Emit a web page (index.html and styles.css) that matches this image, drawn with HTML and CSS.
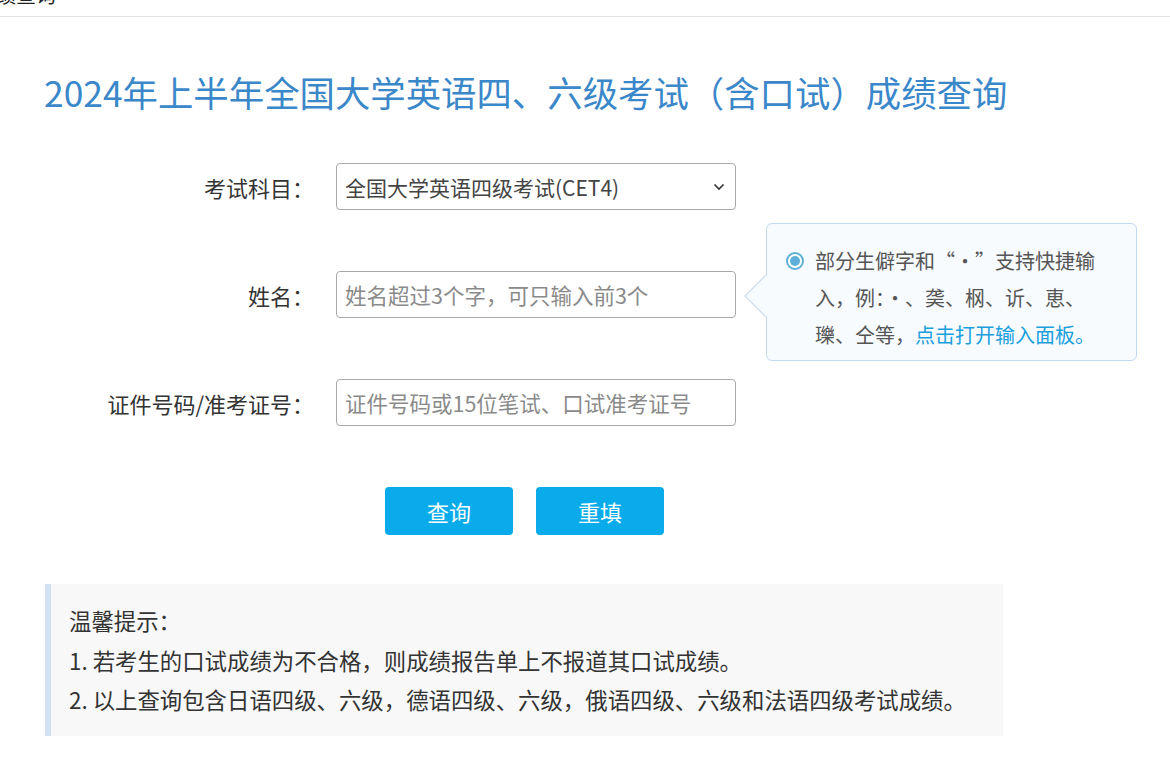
FILE: index.html
```html
<!DOCTYPE html>
<html lang="zh-CN">
<head>
<meta charset="UTF-8">
<title>2024年上半年全国大学英语四、六级考试（含口试）成绩查询</title>
<meta name="viewport" content="width=device-width, initial-scale=1.0">
<link rel="stylesheet" href="styles.css">
</head>
<body>

<div class="topbar"><span>成绩查询</span></div>

<div class="main">

<h1 class="title">2024年上半年全国大学英语四、六级考试（含口试）成绩查询</h1>

<form class="query" onsubmit="return false">
<label class="lbl" for="km">考试科目：</label>
<div class="field">
<select id="km">
<option>全国大学英语四级考试(CET4)</option>
<option>全国大学英语六级考试(CET6)</option>
</select>
</div>

<label class="lbl" for="xm">姓名：</label>
<div class="field name-field">
<input id="xm" placeholder="姓名超过3个字，可只输入前3个">
<div class="tip">
<span class="tip-arrow"></span>
<span class="radio"></span>
<p>部分生僻字和“·”支持快捷输入，例：·、䶮、㭎、䜣、恵、瓅、仝等，<a href="#">点击打开输入面板。</a></p>
</div>
</div>

<label class="lbl" for="zh">证件号码/准考证号：</label>
<div class="field">
<input id="zh" placeholder="证件号码或15位笔试、口试准考证号">
</div>

<div class="btns">
<button type="submit">查询</button>
<button type="reset">重填</button>
</div>
</form>

<div class="notice">
<p>温馨提示：</p>
<p>1. 若考生的口试成绩为不合格，则成绩报告单上不报道其口试成绩。</p>
<p>2. 以上查询包含日语四级、六级，德语四级、六级，俄语四级、六级和法语四级考试成绩。</p>
</div>

</div>

</body>
</html>
```

FILE: styles.css
```css
body{margin:0;background:#fff;color:#333;font-family:"Microsoft YaHei","Noto Sans CJK SC","Noto Sans",sans-serif}
.topbar{height:16px;border-bottom:1px solid #e2e2e2;overflow:hidden}
.topbar span{display:block;font-size:20px;line-height:20px;margin:-15px 0 0 -24px;color:#222}
.main{padding-left:44px}
.title{margin:53px 0 0;font-size:35.4px;line-height:44px;font-weight:normal;color:#3a87c9}
.query{display:grid;grid-template-columns:263px 400px;column-gap:29px;row-gap:61px;align-items:center;margin-top:49px}
.lbl{text-align:right;font-size:22px;line-height:30px;color:#333;margin-right:-7px}
.field{height:47px}
.field select,.field input{box-sizing:border-box;width:400px;height:47px;border:1px solid #a8a8a8;border-radius:4px;background:#fff;font-family:inherit;font-size:21px;color:#444;padding:0 8px;outline:none}
.field select{appearance:none;-webkit-appearance:none;background:#fff url("data:image/svg+xml;utf8,<svg xmlns='http://www.w3.org/2000/svg' width='12' height='8' viewBox='0 0 12 8'><path d='M1.5 1.5 6 6l4.5-4.5' fill='none' stroke='%23333' stroke-width='1.6'/></svg>") no-repeat right 10px center}
.field input{font-size:21.5px}
.field input::placeholder{color:#8a8a8a}
.name-field{position:relative}
.tip{position:absolute;left:430px;top:-48px;box-sizing:border-box;width:371px;height:138px;border:1px solid #c4d9ef;border-radius:6px;background:#f7fbfe;display:flex;gap:11px;padding:18px 0 0 19px}
.tip-arrow{position:absolute;left:-16px;top:56px;width:31px;height:31px;background:#f7fbfe;border-left:1px solid #c4d9ef;border-bottom:1px solid #c4d9ef;transform:rotate(45deg)}
.radio{flex:none;position:relative;box-sizing:border-box;width:18px;height:18px;margin-top:10px;border:2px solid #5cb0d9;border-radius:50%;background:#fff}
.radio::after{content:"";position:absolute;left:2px;top:2px;width:10px;height:10px;border-radius:50%;background:#5cb0d9}
.tip p{margin:0;width:292px;font-size:20px;line-height:37px;color:#555}
.tip a{color:#1ba0de;text-decoration:none}
.btns{grid-column:2;display:flex;gap:23px;padding-left:49px}
.btns button{width:128px;height:48px;border:none;border-radius:4px;background:#0aabea;color:#fff;font-family:inherit;font-size:22px;cursor:pointer}
.notice{margin-top:49px;width:958px;box-sizing:border-box;margin-left:1px;border-left:6px solid #d3e2f2;background:#f8f8f8;padding:17px 0 16px 18px}
.notice p{margin:0;font-size:22.4px;line-height:39.5px;color:#333}
```
